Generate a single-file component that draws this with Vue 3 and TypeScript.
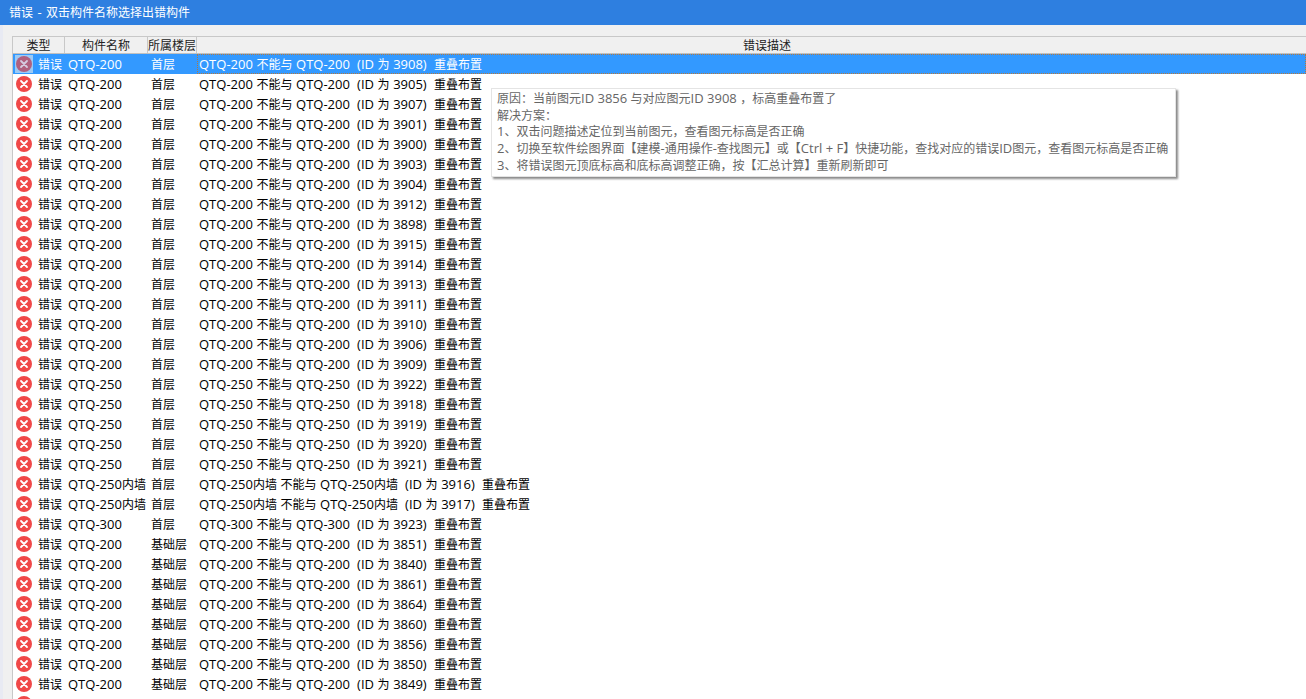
<template>
  <div class="window">
    <div class="title-bar"><Txt t="错误 - 双击构件名称选择出错构件" /></div>
    <div class="content">
      <div class="toolbar"></div>
      <div class="list">
        <div class="list-header">
          <div class="head col-type">类型</div>
          <div class="head col-name">构件名称</div>
          <div class="head col-floor">所属楼层</div>
          <div class="head col-desc">错误描述</div>
        </div>
        <div
          v-for="(row, index) in rows"
          :key="index"
          class="row"
          :class="{ selected: index === 0 }"
        >
          <div class="col-type cell-type">
            <span class="icon-box">
              <svg viewBox="0 0 16 16" class="err-icon">
                <circle class="disc" cx="8" cy="8" r="8" />
                <path class="cross" d="M5 5l6 6M11 5l-6 6" stroke-width="1.8" stroke-linecap="round" fill="none" />
              </svg>
            </span>
            <span v-if="row.name" class="cjk">错误</span>
          </div>
          <template v-if="row.name">
            <div class="col-name cell-name"><Txt :t="row.name" /></div>
            <div class="col-floor cell-floor"><Txt :t="row.floor" /></div>
            <div class="col-desc cell-desc">
              <Txt :t="`${row.name} 不能与 ${row.name}\u00a0\u00a0(ID 为 ${row.id})\u00a0\u00a0重叠布置`" />
            </div>
          </template>
        </div>
      </div>
    </div>
    <div class="tooltip">
      <div v-for="line in tipLines" :key="line" class="tip-line"><Txt :t="line" /></div>
    </div>
  </div>
</template>

<script setup lang="ts">
import { h } from 'vue'
import type { FunctionalComponent } from 'vue'

interface Row {
  name: string
  floor: string
  id: number
}

// latin runs are drawn a point larger than the CJK runs
const CJK = /([\u3000-\u9fff\uff00-\uffef]+)/

const Txt: FunctionalComponent<{ t: string }> = (props) =>
  props.t
    .split(CJK)
    .filter(Boolean)
    .map((part) => (CJK.test(part) ? h('span', { class: 'cjk' }, part) : part))
Txt.props = ['t']

const group = (name: string, floor: string, ids: number[]): Row[] =>
  ids.map((id) => ({ name, floor, id }))

const rows: Row[] = [
  ...group('QTQ-200', '首层', [3908, 3905, 3907, 3901, 3900, 3903, 3904, 3912, 3898, 3915, 3914, 3913, 3911, 3910, 3906, 3909]),
  ...group('QTQ-250', '首层', [3922, 3918, 3919, 3920, 3921]),
  ...group('QTQ-250内墙', '首层', [3916, 3917]),
  ...group('QTQ-300', '首层', [3923]),
  ...group('QTQ-200', '基础层', [3851, 3840, 3861, 3864, 3860, 3856, 3850, 3849]),
  { name: '', floor: '', id: 0 }, // only the icon of this row is inside the window
]

const tipLines = [
  '原因：当前图元ID 3856 与对应图元ID 3908 ，标高重叠布置了',
  '解决方案：',
  '1、双击问题描述定位到当前图元，查看图元标高是否正确',
  '2、切换至软件绘图界面【建模-通用操作-查找图元】或【Ctrl + F】快捷功能，查找对应的错误ID图元，查看图元标高是否正确',
  '3、将错误图元顶底标高和底标高调整正确，按【汇总计算】重新刷新即可',
]
</script>

<style>
html,
body {
  margin: 0;
  height: 100%;
  overflow: hidden;
}

.cjk {
  font-size: 12px;
}
</style>

<style scoped>
.window {
  position: relative;
  width: 1306px;
  height: 699px;
  overflow: hidden;
  background: #f0f0f0;
  font-family: "Open Sans", "Noto Sans CJK SC", sans-serif;
  font-size: 13px;
  color: #000;
}

.title-bar {
  height: 25px;
  line-height: 24px;
  padding-left: 9px;
  background: #2e7fe0;
  color: #fff;
  word-spacing: 1px;
}

.content {
  border-left: 3px solid #e8eaf3;
}

.toolbar {
  height: 11px;
}

.list {
  margin-left: 9px;
  height: 663px;
  background: #fff;
  border-left: 1px solid #c8c8c8;
  border-top: 1px solid #c8c8c8;
  overflow: hidden;
}

.list-header {
  display: flex;
  height: 16px;
  line-height: 17px;
  font-size: 12px;
  background: #f0f0f0;
  border-bottom: 1px solid #c0c0c0;
  color: #222;
}

.head {
  text-align: center;
  border-right: 1px solid #c8c8c8;
  box-sizing: border-box;
}

.head.col-desc {
  border-right: 0;
  padding-left: 31px;
}

.col-type {
  width: 52px;
  flex: none;
}

.col-name {
  width: 83px;
  flex: none;
}

.col-floor {
  width: 49px;
  flex: none;
}

.col-desc {
  flex: 1;
}

.row {
  display: flex;
  height: 20px;
  line-height: 20px;
  white-space: nowrap;
}

.cell-type {
  display: flex;
  align-items: center;
}

.cell-type .cjk {
  padding-top: 1px;
}

.icon-box {
  display: flex;
  align-items: center;
  justify-content: center;
  width: 18px;
  height: 18px;
  margin-left: 2px;
  margin-right: 5px;
}

.err-icon {
  width: 16px;
  height: 16px;
}

.disc {
  fill: #f04848;
}

.cross {
  stroke: #fff;
}

.cell-name {
  padding-left: 3px;
  box-sizing: border-box;
}

.cell-floor {
  padding-left: 3px;
  box-sizing: border-box;
}

.cell-desc {
  padding-left: 2px;
  box-sizing: border-box;
  word-spacing: 0.2px;
}

.selected {
  background: #3399ff;
  color: #fff;
}

.selected .cell-desc {
  outline: 1px dotted #b5793c;
  outline-offset: -1px;
}

.selected .icon-box {
  background: #9ccaf5;
}

.selected .disc {
  fill: #b0607f;
}

.selected .cross {
  stroke: #d5cbe0;
}

.tooltip {
  position: absolute;
  left: 491px;
  top: 88px;
  width: 685px;
  height: 89px;
  box-sizing: border-box;
  padding: 1px 5px;
  background: #fff;
  border: 1px solid #e4e4e4;
  box-shadow: 2px 2px 2px #8a8a8a;
  color: #666;
  line-height: 17px;
  white-space: nowrap;
}

.tip-line {
  height: 16.7px;
}
</style>
